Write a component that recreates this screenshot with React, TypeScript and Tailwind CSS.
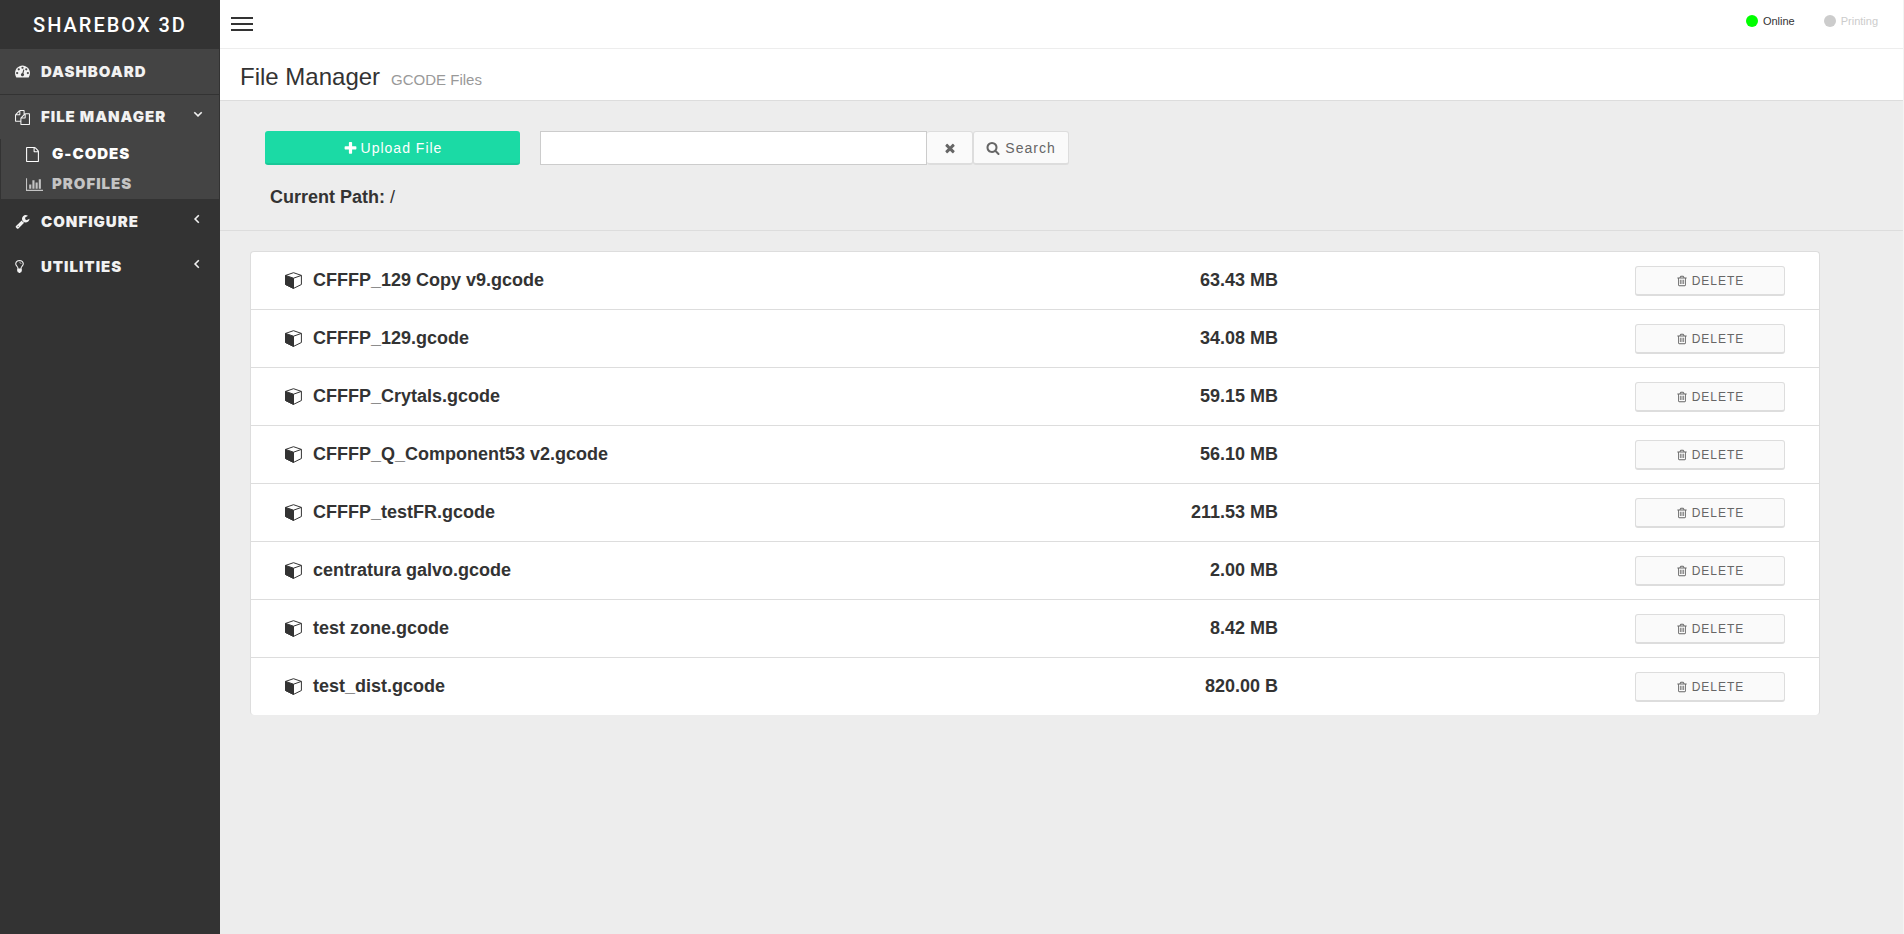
import React from "react";

const paths = {
  plus: "M1600 736v192q0 40-28 68t-68 28h-416v416q0 40-28 68t-68 28h-192q-40 0-68-28t-28-68v-416h-416q-40 0-68-28t-28-68v-192q0-40 28-68t68-28h416v-416q0-40 28-68t68-28h192q40 0 68 28t28 68v416h416q40 0 68 28t28 68z",
  times: "M1490 1322q0 40-28 68l-136 136q-28 28-68 28t-68-28l-294-294-294 294q-28 28-68 28t-68-28l-136-136q-28-28-28-68t28-68l294-294-294-294q-28-28-28-68t28-68l136-136q28-28 68-28t68 28l294 294 294-294q28-28 68-28t68 28l136 136q28 28 28 68t-28 68l-294 294 294 294q28 28 28 68z",
  search: "M1216 832q0-185-131.500-316.500t-316.500-131.500-316.500 131.500-131.500 316.500 131.500 316.500 316.500 131.500 316.500-131.500 131.500-316.500zm512 832q0 52-38 90t-90 38q-54 0-90-38l-343-342q-179 124-399 124-143 0-273.500-55.500t-225-150-150-225-55.500-273.500 55.500-273.500 150-225 225-150 273.500-55.500 273.500 55.500 225 150 150 225 55.500 273.500q0 220-124 399l343 343q37 37 37 90z",
  trash: "M704 736v576q0 14-9 23t-23 9h-64q-14 0-23-9t-9-23v-576q0-14 9-23t23-9h64q14 0 23 9t9 23zm256 0v576q0 14-9 23t-23 9h-64q-14 0-23-9t-9-23v-576q0-14 9-23t23-9h64q14 0 23 9t9 23zm256 0v576q0 14-9 23t-23 9h-64q-14 0-23-9t-9-23v-576q0-14 9-23t23-9h64q14 0 23 9t9 23zm128 724v-948h-896v948q0 22 7 40.500t14.500 27 10.500 8.500h832q3 0 10.500-8.500t14.500-27 7-40.500zm-672-1076h448l-48-117q-7-9-17-11h-317q-10 2-17 11zm928 32v64q0 14-9 23t-23 9h-96v948q0 83-47 143.500t-113 60.500h-832q-66 0-113-58.500t-47-141.500v-952h-96q-14 0-23-9t-9-23v-64q0-14 9-23t23-9h309l70-167q15-37 54-63t79-26h320q40 0 79 26t54 63l70 167h309q14 0 23 9t9 23z",
  wrench: "M448 1472q0-26-19-45t-45-19-45 19-19 45 19 45 45 19 45-19 19-45zm644-420l-682 682q-37 37-90 37-52 0-91-37l-106-108q-38-36-38-90 0-53 38-91l681-681q39 98 114.500 173.500t173.500 114.500zm634-435q0 39-23 106-47 134-164.500 217.500t-258.500 83.500q-185 0-316.500-131.500t-131.500-316.500 131.500-316.500 316.500-131.500q58 0 121.500 16.500t107.500 46.500q16 11 16 28t-16 28l-293 169v224l193 107q5-3 79-48.500t135.500-81 70.500-35.500q15 0 23.500 10t8.500 25z",
  bulb: "M1120 576q0 13-9.500 22.500t-22.500 9.500-22.500-9.500-9.500-22.500q0-46-54-71t-106-25q-13 0-22.500-9.500t-9.500-22.500 9.500-22.500 22.500-9.500q50 0 99.500 16t87 54 37.500 90zm160 0q0-72-34.500-134t-90-101.500-123-62-136.500-22.500-136.500 22.500-123 62-90 101.500-34.500 134q0 101 68 180 10 11 30.500 33t30.500 33q128 153 141 298h228q13-145 141-298 10-11 30.500-33t30.500-33q68-79 68-180zm128 0q0 155-103 268-45 49-74.500 87t-59.500 95.500-34 107.500q47 28 47 82 0 37-25 64 25 27 25 64 0 52-45 81 13 23 13 47 0 46-31.500 71t-77.500 25q-20 44-60 70t-87 26-87-26-60-70q-46 0-77.500-25t-31.500-71q0-24 13-47-45-29-45-81 0-37 25-64-25-27-25-64 0-54 47-82-4-50-34-107.500t-59.500-95.500-74.500-87q-103-113-103-268 0-99 44.500-184.500t117-142 164-89 186.500-32.500 186.500 32.500 164 89 117 142 44.500 184.500z",
  files: "M1696 384q40 0 68 28t28 68v1216q0 40-28 68t-68 28h-960q-40 0-68-28t-28-68v-288h-544q-40 0-68-28t-28-68v-672q0-40 20-88t48-76l408-408q28-28 76-48t88-20h416q40 0 68 28t28 68v328q68-40 128-40h416zm-544 213l-299 299h299v-299zm-640-384l-299 299h299v-299zm196 647l316-316v-416h-384v416q0 40-28 68t-68 28h-416v640h512v-256q0-40 20-88t48-76zm956 804v-1152h-384v416q0 40-28 68t-68 28h-416v640h896z",
  file: "M1596 380q28 28 48 76t20 88v1152q0 40-28 68t-68 28h-1344q-40 0-68-28t-28-68v-1600q0-40 28-68t68-28h896q40 0 88 20t76 48zm-444-244v376h376q-10-29-22-41l-313-313q-12-12-41-22zm384 1528v-1024h-416q-40 0-68-28t-28-68v-416h-768v1536h1280z",
  chart: "M640 896v512h-256v-512h256zm384-512v1024h-256v-1024h256zm1024 1152v128h-2048v-1536h128v1408h1920zm-640-896v768h-256v-768h256zm384-384v1152h-256v-1152h256z",
  gauge: "M384 1152q0-53-37.500-90.500t-90.500-37.500-90.500 37.500-37.500 90.500 37.500 90.500 90.500 37.500 90.500-37.500 37.500-90.500zm192-448q0-53-37.500-90.500t-90.500-37.500-90.500 37.500-37.500 90.500 37.500 90.500 90.500 37.500 90.500-37.500 37.500-90.500zm428 481l101-382q6-26-7.500-48.500t-38.500-29.500-48 6.500-30 39.500l-101 382q-60 5-107 43.500t-63 98.500q-20 77 20 146t117 89 146-20 89-117q16-60-6-117t-72-91zm660-33q0-53-37.500-90.500t-90.500-37.500-90.500 37.500-37.500 90.500 37.500 90.500 90.500 37.500 90.500-37.500 37.500-90.500zm-640-640q0-53-37.500-90.500t-90.500-37.500-90.500 37.500-37.500 90.500 37.500 90.500 90.500 37.500 90.500-37.500 37.500-90.500zm448 192q0-53-37.500-90.500t-90.500-37.500-90.500 37.500-37.500 90.500 37.500 90.500 90.500 37.500 90.500-37.500 37.500-90.500zm320 448q0 261-141 483-19 29-54 29h-1402q-35 0-54-29-141-221-141-483 0-182 71-348t191-286 286-191 348-71 348 71 286 191 191 286 71 348z",
};

function Icon({ name, className, viewBox = "0 0 1792 1792" }: { name: keyof typeof paths; className: string; viewBox?: string }) {
  return (
    <svg viewBox={viewBox} className={`shrink-0 ${className}`} fill="currentColor" aria-hidden="true">
      <path d={paths[name]} />
    </svg>
  );
}

function Cube() {
  return (
    <svg viewBox="0 0 17 17" className="size-[17px] shrink-0" fill="none" stroke="currentColor" strokeLinejoin="round" aria-hidden="true">
      <path d="M8.5 0.7L16.4 3.4V12.5L8.5 16.4L0.6 12.5V3.4Z" />
      <path d="M8.5 6.2L16.4 3.4" />
      <path d="M0.6 3.4L8.5 6.2V16.4L0.6 12.5Z" fill="currentColor" />
    </svg>
  );
}

function Chevron({ className }: { className: string }) {
  return (
    <svg viewBox="0 0 10 10" className={`mb-[6px] ml-auto size-[10px] shrink-0 ${className}`} fill="none" stroke="currentColor" strokeWidth="1.6" aria-hidden="true">
      <path d="M1.3 3.2L5 6.9L8.7 3.2" />
    </svg>
  );
}

const files = [
  ["CFFFP_129 Copy v9.gcode", "63.43 MB"],
  ["CFFFP_129.gcode", "34.08 MB"],
  ["CFFFP_Crytals.gcode", "59.15 MB"],
  ["CFFFP_Q_Component53 v2.gcode", "56.10 MB"],
  ["CFFFP_testFR.gcode", "211.53 MB"],
  ["centratura galvo.gcode", "2.00 MB"],
  ["test zone.gcode", "8.42 MB"],
  ["test_dist.gcode", "820.00 B"],
];

function Sidebar() {
  return (
    <aside className="w-[220px] shrink-0 bg-[#333333] text-[#f2f2f2]">
      <a href="#" className="flex h-[49px] items-center justify-center font-['Roboto',sans-serif] text-[20px] font-medium tracking-[2px] text-white">
        SHAREBOX 3D
      </a>
      <nav className="font-['Inter',sans-serif] text-[15px] leading-5 font-black tracking-[1px]">
        <div className="mr-px bg-[#444444]">
          <a href="#" className="flex h-[46px] items-center border-b border-[#333333] pl-[15px]">
            <Icon name="gauge" viewBox="0 64 1792 1792" className="size-[15px]" />
            <span className="ml-[11px]">DASHBOARD</span>
          </a>
          <a href="#" className="flex h-11 items-center pr-4 pl-[15px]">
            <Icon name="files" className="size-[15px]" />
            <span className="ml-[11px]">FILE MANAGER</span>
            <Chevron className="" />
          </a>
          <div className="border-l border-[#333333]">
            <a href="#" className="flex h-[30px] items-center pl-[25px] text-white">
              <Icon name="file" viewBox="128 0 1536 1792" className="h-[15px] w-[13px]" />
              <span className="ml-[13px]">G-CODES</span>
            </a>
            <a href="#" className="flex h-[30px] items-center pl-[25px] text-[#c4c4c4]">
              <Icon name="chart" viewBox="0 0 2048 1792" className="h-[15px] w-[17px]" />
              <span className="ml-[9px]">PROFILES</span>
            </a>
          </div>
        </div>
        <a href="#" className="flex h-[45px] items-center pr-[18px] pl-[15px]">
          <Icon name="wrench" className="size-[15px]" />
          <span className="ml-[11px]">CONFIGURE</span>
          <Chevron className="rotate-90" />
        </a>
        <a href="#" className="flex h-[45px] items-center pr-[18px] pl-[15px]">
          <Icon name="bulb" viewBox="384 0 1024 1792" className="h-[15px] w-[9px]" />
          <span className="ml-[17px]">UTILITIES</span>
          <Chevron className="rotate-90" />
        </a>
      </nav>
    </aside>
  );
}

export default function App() {
  return (
    <div className="flex min-h-screen bg-[#ededed] font-['Liberation_Sans',Arial,sans-serif] text-[#333333]">
      <Sidebar />
      <main className="min-w-0 flex-1 border-r border-[#f3f3f3]">
        <header className="flex h-[49px] justify-between border-b border-[#ededed] bg-white pr-[25px] pl-[11px]">
          <button type="button" aria-label="Toggle menu" className="mt-[17px] flex h-[14px] w-[22px] flex-col justify-between">
            <span className="h-[2px] w-full bg-[#333333]" />
            <span className="h-[2px] w-full bg-[#333333]" />
            <span className="h-[2px] w-full bg-[#333333]" />
          </button>
          <div className="mt-[13px] flex h-4 items-center gap-[29px] text-[11px]">
            <span className="flex items-center gap-[5px]">
              <span className="mb-px size-3 rounded-full bg-[#00ff00]" />
              Online
            </span>
            <span className="flex items-center gap-[5px] text-[#cccccc]">
              <span className="mb-px size-3 rounded-full bg-[#cccccc]" />
              Printing
            </span>
          </div>
        </header>
        <div className="flex h-[52px] items-baseline gap-[11px] border-b border-[#dddddd] bg-white pt-[14px] pl-5">
          <h1 className="text-[24px] leading-7">File Manager</h1>
          <span className="text-[15px] text-[#999999]">GCODE Files</span>
        </div>
        <section className="h-[130px] border-b border-[#dddddd] pt-[30px] pl-[45px]">
          <div className="flex h-[34px] text-[14px] tracking-[1px]">
            <button type="button" className="flex w-[255px] items-center justify-center rounded-[3px] border-b-2 border-[#19c898] bg-[#1bdaa5] pt-[2px] text-white">
              <Icon name="plus" className="mr-[3px] size-[15px]" />
              Upload File
            </button>
            <input type="text" aria-label="Search files" className="ml-5 w-[387px] border border-[#cccccc] bg-white px-3" />
            <button type="button" aria-label="Clear search" className="flex w-[46px] items-center justify-center rounded-[3px] border border-b-2 border-l-0 border-[#dddddd] bg-[#fafafa] pt-px text-[#666666]">
              <Icon name="times" className="size-[14px]" />
            </button>
            <button type="button" className="flex w-24 items-center justify-center rounded-[3px] border border-b-2 border-[#dddddd] bg-[#fafafa] pt-px text-[#666666]">
              <Icon name="search" className="mr-[5px] size-[14px]" />
              Search
            </button>
          </div>
          <p className="mt-5 ml-[5px] text-[18px] leading-6">
            <strong>Current Path:</strong> /
          </p>
        </section>
        <div className="mt-5 mr-[83px] ml-[30px] overflow-hidden rounded-[4px] border border-b-0 border-[#dddddd] bg-white">
          <table className="w-full table-fixed border-separate border-spacing-0 text-[18px] font-bold">
            <tbody>
              {files.map(([name, size]) => (
                <tr key={name} className="group">
                  <td className="h-[58px] w-1/2 border-b border-[#dddddd] p-0 pl-[34px] group-last:h-[57px] group-last:border-b-0">
                    <span className="flex items-center gap-[11px]">
                      <Cube />
                      {name}
                    </span>
                  </td>
                  <td className="w-[15.5%] border-b border-[#dddddd] p-0 text-right group-last:border-b-0">{size}</td>
                  <td className="border-b border-[#dddddd] p-0 pr-[34px] group-last:border-b-0">
                    <button type="button" className="ml-auto flex h-[30px] w-[150px] items-center justify-center rounded-[3px] border border-b-2 border-[#dddddd] bg-[#fafafa] pt-px text-[12px] font-normal tracking-[1px] text-[#666666]">
                      <Icon name="trash" className="mr-1 size-3" />
                      DELETE
                    </button>
                  </td>
                </tr>
              ))}
            </tbody>
          </table>
        </div>
      </main>
    </div>
  );
}
